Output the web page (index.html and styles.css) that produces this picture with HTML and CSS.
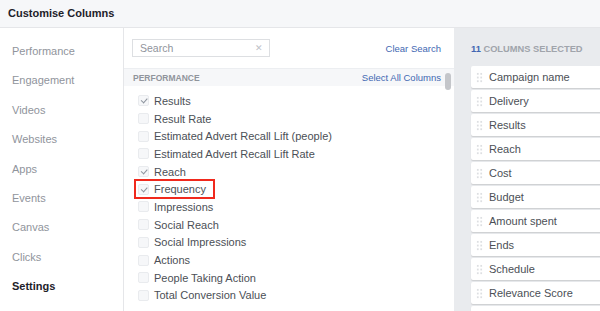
FILE: index.html
```html
<!DOCTYPE html>
<html lang="en">
<head>
    <meta charset="UTF-8">
    <title>Customise Columns</title>
    <link rel="stylesheet" href="styles.css">
</head>
<body>
    <div class="dialog-header">Customise Columns</div>

    <div class="dialog-body">
        <ul class="nav-list">
            <li>Performance</li>
            <li>Engagement</li>
            <li>Videos</li>
            <li>Websites</li>
            <li>Apps</li>
            <li>Events</li>
            <li>Canvas</li>
            <li>Clicks</li>
            <li class="active">Settings</li>
        </ul>

        <div class="column-picker">
            <div class="search-row">
                <div class="search-box">
                    <span class="search-placeholder">Search</span>
                    <span class="search-clear">&#x2715;</span>
                </div>
                <a class="link">Clear Search</a>
            </div>

            <div class="section-head">
                <span>PERFORMANCE</span>
                <a class="link">Select All Columns</a>
                <div class="scroll-thumb"></div>
            </div>

            <ul class="check-list">
                <li class="checked"><span class="box"></span>Results</li>
                <li><span class="box"></span>Result Rate</li>
                <li><span class="box"></span>Estimated Advert Recall Lift (people)</li>
                <li><span class="box"></span>Estimated Advert Recall Lift Rate</li>
                <li class="checked"><span class="box"></span>Reach</li>
                <li class="checked highlight"><span class="box"></span>Frequency</li>
                <li><span class="box"></span>Impressions</li>
                <li><span class="box"></span>Social Reach</li>
                <li><span class="box"></span>Social Impressions</li>
                <li><span class="box"></span>Actions</li>
                <li><span class="box"></span>People Taking Action</li>
                <li><span class="box"></span>Total Conversion Value</li>
            </ul>
        </div>

        <div class="selected-panel">
            <div class="selected-title"><span class="count">11</span> COLUMNS SELECTED</div>
            <ul class="selected-list">
                <li><span class="handle"></span>Campaign name</li>
                <li><span class="handle"></span>Delivery</li>
                <li><span class="handle"></span>Results</li>
                <li><span class="handle"></span>Reach</li>
                <li><span class="handle"></span>Cost</li>
                <li><span class="handle"></span>Budget</li>
                <li><span class="handle"></span>Amount spent</li>
                <li><span class="handle"></span>Ends</li>
                <li><span class="handle"></span>Schedule</li>
                <li><span class="handle"></span>Relevance Score</li>
                <li><span class="handle"></span>&nbsp;</li>
            </ul>
        </div>
    </div>
</body>
</html>
```

FILE: styles.css
```css
html, body {
    overflow: hidden;
}

body {
    margin: 0;
    font-family: 'Liberation Sans', Arial, sans-serif;
    background-color: white;
    height: 311px;
}

ul {
    list-style: none;
    margin: 0;
    padding: 0;
}

.dialog-header {
    height: 27px;
    line-height: 27px;
    padding-left: 8px;
    font-size: 11px;
    font-weight: bold;
    color: #1d2129;
    background-color: #f6f7f9;
    border-bottom: 1px solid #e5e6e9;
}

.dialog-body {
    display: flex;
    height: 283px;
    overflow: hidden;
}

.nav-list {
    width: 123px;
    flex-shrink: 0;
    border-right: 1px solid #e5e6e9;
    padding-top: 9px;
}

.nav-list li {
    height: 29.4px;
    line-height: 29.4px;
    padding-left: 12px;
    font-size: 11px;
    color: #90949c;
}

.nav-list li.active {
    color: #1d2129;
    font-weight: bold;
}

.column-picker {
    width: 330px;
    flex-shrink: 0;
    overflow: hidden;
}

.search-row {
    display: flex;
    align-items: center;
    justify-content: space-between;
    padding: 9px 13px 0 8px;
    height: 31px;
    box-sizing: border-box;
}

.search-box {
    width: 138px;
    height: 18px;
    box-sizing: border-box;
    border: 1px solid #dddfe2;
    display: flex;
    align-items: center;
    justify-content: space-between;
    padding: 0 6px 0 7px;
}

.search-placeholder {
    font-size: 10.5px;
    color: #90949c;
}

.search-clear {
    font-size: 9px;
    color: #bec2c9;
}

.link {
    font-size: 9.5px;
    color: #4267b2;
}

.section-head {
    position: relative;
    margin-top: 9px;
    height: 18px;
    background-color: #f6f7f9;
    display: flex;
    align-items: center;
    justify-content: space-between;
    padding: 0 13px 0 9px;
    border-top: 1px solid #eceef1;
    box-sizing: border-box;
}

.section-head span {
    font-size: 8.5px;
    font-weight: bold;
    color: #90949c;
}

.scroll-thumb {
    position: absolute;
    right: 3px;
    top: 4px;
    width: 6px;
    height: 17px;
    border-radius: 3px;
    background-color: #c4c6ca;
}

.check-list {
    padding-top: 6px;
}

.check-list li {
    display: flex;
    align-items: center;
    height: 17.7px;
    margin-left: 11px;
    font-size: 11px;
    color: #4b4f56;
    width: max-content;
    padding-right: 6px;
}

.check-list .box {
    width: 11px;
    height: 11px;
    box-sizing: border-box;
    border: 1px solid #e9ebee;
    background-color: #f6f7f9;
    border-radius: 2px;
    margin: 0 5px 0 3px;
    position: relative;
}

.check-list li.checked .box::after {
    content: '';
    position: absolute;
    left: 2px;
    top: 2px;
    width: 5px;
    height: 2.5px;
    border-left: 1.5px solid #8d949e;
    border-bottom: 1.5px solid #8d949e;
    transform: rotate(-48deg);
}

.check-list li.highlight {
    outline: 2px solid #f0291d;
    outline-offset: -1px;
    padding-right: 8px;
}

.selected-panel {
    flex: 1;
    background-color: #e9ebee;
    padding-left: 17px;
    overflow: hidden;
}

.selected-title {
    height: 38px;
    line-height: 43px;
    font-size: 9.3px;
    font-weight: bold;
    color: #a0a4ab;
}

.selected-title .count {
    color: #4267b2;
}

.selected-list li {
    display: flex;
    align-items: center;
    height: 22px;
    margin-bottom: 2px;
    margin-right: -40px;
    background-color: white;
    border-radius: 2px;
    box-shadow: 0 1px 1px rgba(0, 0, 0, 0.12);
    font-size: 11px;
    color: #4b4f56;
}

.handle {
    width: 7px;
    height: 11px;
    margin: 0 6px 0 5px;
    background-image: radial-gradient(circle, #dddfe2 1px, transparent 1.2px);
    background-size: 3.5px 3.7px;
}
```
